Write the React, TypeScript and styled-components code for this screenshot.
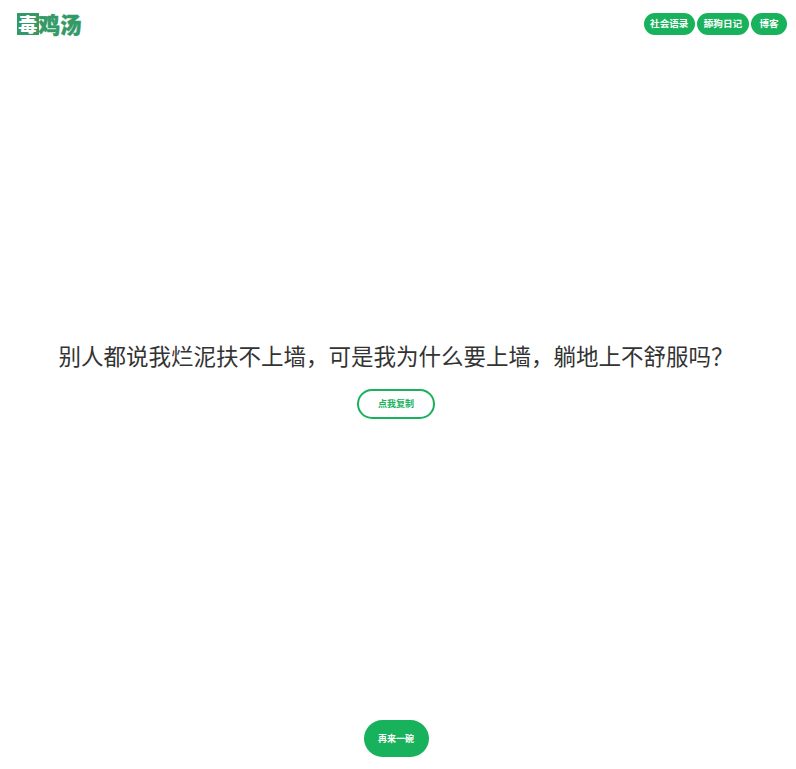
import React from "react";
import styled, { createGlobalStyle } from "styled-components";

const Global = createGlobalStyle`
  html, body { margin: 0; padding: 0; background: #fff; }
  body { font-family: "Liberation Sans", "Noto Sans CJK SC", sans-serif; }
`;
const Page = styled.div`
  height: 769px;
  display: flex;
  flex-direction: column;
  overflow: hidden;
`;
const Header = styled.header`
  display: flex;
  justify-content: space-between;
  align-items: center;
  height: 48px;
  padding: 0 9px 0 17px;
`;
const Logo = styled.div`
  display: flex;
  align-items: center;
  font-family: "Noto Sans CJK SC", sans-serif;
  font-weight: 900;
  font-size: 21.5px;
  line-height: 22px;
  color: #339966;
  -webkit-text-stroke: 0.5px #339966;
`;
const LogoMark = styled.span`
  background: #339966;
  color: #fff;
  -webkit-text-stroke: 0;
  font-size: 19px;
  text-align: center;
  width: 21.5px;
  height: 22px;
  display: block;
`;
const Nav = styled.nav`
  display: flex;
  gap: 2.5px;
`;
const NavLink = styled.a`
  box-sizing: border-box;
  min-width: 36px;
  text-align: center;
  background: #19b25c;
  color: #fff;
  font-size: 9.6px;
  font-weight: 700;
  line-height: 22px;
  padding: 0 6.4px;
  border-radius: 11px;
`;
const Main = styled.main`
  flex: 1;
  display: flex;
  flex-direction: column;
  align-items: center;
  justify-content: center;
  padding: 0 4px 8px 0;
`;
const Quote = styled.p`
  margin: 0 0 15px;
  font-size: 22.5px;
  line-height: 32px;
  color: #333;
`;
const CopyButton = styled.button`
  box-sizing: border-box;
  width: 78px;
  height: 30px;
  border: 2px solid #19b25c;
  border-radius: 15px;
  background: #fff;
  color: #19b25c;
  font: 700 9px "Liberation Sans", "Noto Sans CJK SC", sans-serif;
`;
const Footer = styled.footer`
  display: flex;
  justify-content: center;
  padding: 0 4px 12px 0;
`;
const AgainButton = styled.button`
  width: 65px;
  height: 37px;
  border: 0;
  border-radius: 18.5px;
  background: #19b25c;
  color: #fff;
  font: 700 9px "Liberation Sans", "Noto Sans CJK SC", sans-serif;
`;

export default function App() {
  return (
    <Page>
      <Global />
      <Header>
        <Logo>
          <LogoMark>毒</LogoMark>
          鸡汤
        </Logo>
        <Nav>
          <NavLink>社会语录</NavLink>
          <NavLink>舔狗日记</NavLink>
          <NavLink>博客</NavLink>
        </Nav>
      </Header>
      <Main>
        <Quote>别人都说我烂泥扶不上墙，可是我为什么要上墙，躺地上不舒服吗？</Quote>
        <CopyButton>点我复制</CopyButton>
      </Main>
      <Footer>
        <AgainButton>再来一碗</AgainButton>
      </Footer>
    </Page>
  );
}
